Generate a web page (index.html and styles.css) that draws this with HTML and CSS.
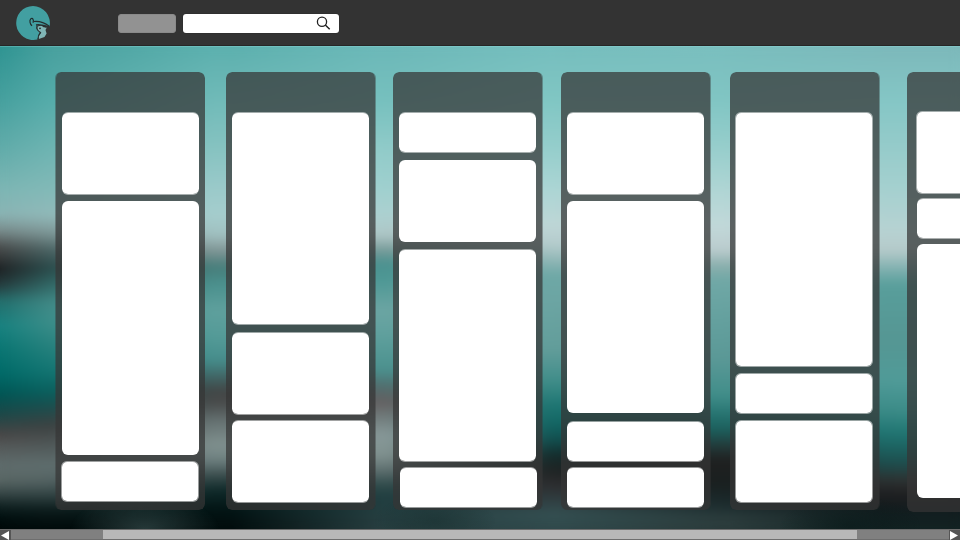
FILE: index.html
```
<!DOCTYPE html>
<html lang="en">
<head>
<meta charset="utf-8">
<title>Board</title>
<link rel="stylesheet" href="styles.css">
</head>
<body>
<header class="topbar">
  <svg class="logo" width="34" height="34" viewBox="0 0 34 34">
    <path d="M17 0A17 17 0 0 1 33.600 20.300C30 18.800 26 18.200 21.500 19.300L20.500 22.500L24 27L21.300 33.500A17 17 0 1 1 17 0Z" fill="#429fa1"/>
    <path d="M21.500 20.500L25.500 19.600L27.500 21.300L30.800 21.600L29.500 24L30.600 27.500L28.500 31L22.800 33L22.600 30.500L24.800 27.200L22 25L21.300 22.800Z" fill="#80b5b5"/>
    <path d="M16 19.800C14 18 13.200 14.500 14.700 12.900C16.400 11.400 18.200 13.500 17 16.800" fill="none" stroke="#202c2d" stroke-width="1.200"/>
    <path d="M18 15.500C23 15 29 17 33.300 20.200M20 18.900C23.500 18 27 19 30.500 21.300M21 19.500C20.200 22.500 21.500 24.800 24.500 26.500C22.500 28.500 22 30 22 33" fill="none" stroke="#252f30" stroke-width="1.100"/>
    <circle cx="24" cy="22.300" r=".9" fill="#202c2d"/>
  </svg>
  <div class="chip"></div>
  <div class="search">
    <svg width="15" height="15" viewBox="0 0 15 15" fill="none" stroke="#222">
      <circle cx="6" cy="5.700" r="4.600" stroke-width="1.300"/>
      <path d="M9.300 9L13.700 13.200" stroke-width="1.500"/>
    </svg>
  </div>
</header>
<main class="board">
  <div class="scenery">
    <div class="band b1"></div><div class="band b2"></div><div class="band b3"></div><div class="band b4"></div>
    <div class="band b5"></div><div class="band b6"></div><div class="band b7"></div><div class="glow"></div>
  </div>
  <section class="column c1"><div class="card m half"></div><div class="card xl"></div><div class="card s half"></div></section>
  <section class="column c2"><div class="card l half"></div><div class="card m half"></div><div class="card m half"></div></section>
  <section class="column c3"><div class="card s half"></div><div class="card m"></div><div class="card l half"></div><div class="card s half"></div></section>
  <section class="column c4"><div class="card m half"></div><div class="card l"></div><div class="card s half"></div><div class="card s half"></div></section>
  <section class="column c5"><div class="card xl half"></div><div class="card s half"></div><div class="card m half"></div></section>
  <section class="column c6"><div class="card m half"></div><div class="card s half"></div><div class="card xl"></div></section>
</main>
<footer class="scrollbar">
  <div class="arrow"><svg width="8" height="9" viewBox="0 0 8 9"><path d="M0 4.500L8 0V9Z" fill="#fff"/></svg></div>
  <div class="track"><div class="thumb"></div></div>
  <div class="arrow"><svg width="8" height="9" viewBox="0 0 8 9"><path d="M8 4.500L0 0V9Z" fill="#fff"/></svg></div>
</footer>
</body>
</html>
```
FILE: styles.css
```
* { box-sizing: border-box; }
body { margin: 0; width: 960px; height: 540px; overflow: hidden; display: flex; flex-direction: column; background: #333; font-family: "Liberation Sans", sans-serif; }
.topbar { height: 46px; flex: none; display: flex; align-items: center; padding-left: 16px; background: #333; border-bottom: 1px solid #262626; }
.logo { overflow: hidden; }
.chip { width: 58px; height: 19px; margin-left: 68px; margin-top: 2px; border-radius: 3px; background: #929292; border: 1px solid #8a8a8a; }
.search { width: 156px; height: 19px; margin: 2px 0 0 7px; padding-right: 8px; border-radius: 3px; background: #fff; display: flex; align-items: center; justify-content: flex-end; box-shadow: 0 0 1px #111; }

.board { position: relative; height: 483px; flex: none; display: flex; align-items: flex-start; padding: 26px 0 0 55px; overflow: hidden; }

/* Blurred landscape: vertical bands that fade into each other from left to right. */
.scenery, .band, .glow { position: absolute; inset: 0; }
.b1 { background: linear-gradient(rgb(47,148,146) 0, rgb(70,160,158) 54px, rgb(98,172,170) 104px, rgb(125,182,180) 144px, rgb(138,180,180) 168px, rgb(122,142,142) 184px, rgb(75,78,78) 201px, rgb(30,34,36) 223px, rgb(38,60,62) 239px, rgb(35,110,108) 255px, rgb(25,130,128) 279px, rgb(10,118,115) 304px, rgb(0,105,103) 329px, rgb(2,85,84) 349px, rgb(30,72,72) 369px, rgb(72,70,70) 388px, rgb(85,90,90) 401px, rgb(95,108,108) 419px, rgb(90,103,101) 434px, rgb(60,75,75) 446px, rgb(18,35,35) 460px, rgb(0,15,15) 472px, rgb(0,8,8) 483px); }
.b2 { background: linear-gradient(rgb(72,160,158) 0, rgb(85,172,170) 54px, rgb(110,180,178) 104px, rgb(130,185,183) 144px, rgb(145,185,185) 169px, rgb(125,150,150) 187px, rgb(75,100,100) 204px, rgb(42,75,75) 222px, rgb(50,105,103) 239px, rgb(65,138,135) 257px, rgb(60,142,138) 276px, rgb(40,130,126) 299px, rgb(20,118,115) 324px, rgb(10,98,96) 344px, rgb(25,80,80) 359px, rgb(60,65,65) 379px, rgb(75,82,82) 394px, rgb(95,110,110) 419px, rgb(85,100,100) 434px, rgb(50,68,68) 449px, rgb(12,28,28) 464px, rgb(0,10,10) 483px); -webkit-mask-image: linear-gradient(90deg, transparent 0, #000 52px); }
.b3 { background: linear-gradient(rgb(92,176,174) 0, rgb(112,186,184) 54px, rgb(135,195,193) 104px, rgb(155,202,202) 144px, rgb(165,205,205) 169px, rgb(160,192,192) 189px, rgb(130,150,150) 204px, rgb(70,125,122) 221px, rgb(75,145,142) 239px, rgb(95,160,157) 264px, rgb(85,155,152) 289px, rgb(70,142,140) 314px, rgb(65,105,105) 329px, rgb(66,68,68) 346px, rgb(75,78,78) 359px, rgb(100,112,112) 374px, rgb(128,145,143) 399px, rgb(110,128,128) 414px, rgb(60,78,78) 429px, rgb(15,42,42) 444px, rgb(2,20,20) 464px, rgb(2,12,12) 483px); -webkit-mask-image: linear-gradient(90deg, transparent 50px, #000 215px); }
.b4 { background: linear-gradient(rgb(108,184,184) 0, rgb(118,192,190) 54px, rgb(145,203,201) 104px, rgb(160,208,207) 144px, rgb(172,208,208) 169px, rgb(175,198,198) 189px, rgb(120,155,153) 204px, rgb(75,145,143) 217px, rgb(78,152,149) 234px, rgb(108,165,163) 264px, rgb(95,160,157) 289px, rgb(75,145,142) 324px, rgb(80,112,112) 339px, rgb(100,95,96) 356px, rgb(110,120,120) 369px, rgb(135,152,152) 389px, rgb(128,145,143) 409px, rgb(95,112,112) 424px, rgb(48,75,75) 439px, rgb(32,62,64) 451px, rgb(40,62,64) 483px); -webkit-mask-image: linear-gradient(90deg, transparent 230px, #000 380px); }
.b5 { background: linear-gradient(rgb(118,190,190) 0, rgb(128,198,195) 54px, rgb(150,206,204) 104px, rgb(172,213,212) 144px, rgb(190,214,214) 179px, rgb(180,203,204) 199px, rgb(145,183,182) 214px, rgb(110,168,166) 229px, rgb(108,165,163) 254px, rgb(98,157,154) 304px, rgb(65,142,138) 334px, rgb(30,118,115) 359px, rgb(18,100,98) 379px, rgb(18,78,78) 394px, rgb(20,45,45) 409px, rgb(30,35,35) 424px, rgb(45,45,47) 439px, rgb(48,62,65) 454px, rgb(52,80,82) 469px, rgb(48,72,74) 483px); -webkit-mask-image: linear-gradient(90deg, transparent 386px, #000 552px); }
.b6 { background: linear-gradient(rgb(122,190,190) 0, rgb(128,197,195) 54px, rgb(152,206,204) 104px, rgb(175,213,212) 144px, rgb(193,216,217) 179px, rgb(187,204,206) 204px, rgb(140,175,173) 219px, rgb(112,168,166) 234px, rgb(100,160,158) 274px, rgb(90,152,150) 314px, rgb(65,142,138) 349px, rgb(38,115,112) 369px, rgb(28,95,92) 384px, rgb(35,60,60) 399px, rgb(32,32,32) 414px, rgb(25,32,32) 439px, rgb(28,44,46) 459px, rgb(45,62,62) 474px, rgb(42,58,58) 483px); -webkit-mask-image: linear-gradient(90deg, transparent 560px, #000 720px); }
.b7 { background: linear-gradient(rgb(124,184,186) 0, rgb(132,198,197) 54px, rgb(150,203,202) 104px, rgb(165,208,207) 144px, rgb(182,210,210) 184px, rgb(182,202,202) 204px, rgb(125,175,174) 224px, rgb(88,158,155) 239px, rgb(85,150,147) 294px, rgb(80,155,152) 334px, rgb(60,140,136) 364px, rgb(35,120,117) 384px, rgb(28,102,100) 399px, rgb(30,75,75) 419px, rgb(45,50,50) 434px, rgb(30,30,32) 449px, rgb(18,28,30) 464px, rgb(18,35,35) 483px); -webkit-mask-image: linear-gradient(90deg, transparent 730px, #000 885px); }
.glow { backdrop-filter: blur(5px); background: radial-gradient(ellipse 75px 34px at 145px 483px, rgba(62,86,86,.6), transparent), radial-gradient(ellipse 60px 28px at 435px 475px, rgba(25,48,48,.6), transparent), radial-gradient(ellipse 70px 30px at 850px 480px, rgba(12,28,28,.8), transparent); box-shadow: inset 0 1px rgba(150,225,225,.3); }

.column { position: relative; flex: none; width: 150px; height: 438px; padding: 40px 6px 0 7px; border-radius: 6px; background: rgba(54,54,54,.73); background-clip: padding-box; border-right: 1px solid rgba(54,54,54,.4); display: flex; flex-direction: column; align-items: flex-start; }
.c1 { border-right: 0; border-left: 1px solid rgba(54,54,54,.4); padding-left: 6px; }
.c2 { margin-left: 21px; padding-left: 6px; }
.c3 { margin-left: 17px; padding-left: 6px; }
.c4 { margin-left: 18px; padding-left: 6px; }
.c5 { margin-left: 19px; padding-left: 5px; }
.c6 { margin-left: 27px; padding: 39px 0 0 9px; height: 440px; }

.card { flex: none; width: 137px; border-radius: 6px; background: #fff; }
.s { height: 40px; }
.m { height: 82px; }
.l { height: 212px; }
.xl { height: 254px; }
.half { border: solid rgba(255,255,255,.5); border-width: 1px 0; background-clip: padding-box; }
.s.half { height: 41px; }
.m.half { height: 83px; }
.l.half { height: 213px; }
.xl.half { height: 255px; }
.c1 .card:nth-child(2) { margin: 6px 0; }
.c1 .card:nth-child(3) { margin-left: -1px; width: 138px; border-width: 1px; }
.c2 .card:nth-child(2) { margin: 7px 0 5px; }
.c3 .card:nth-child(2) { margin: 7px 0; }
.c3 .card:nth-child(4) { margin: 5px 0 0 1px; }
.c4 .card:nth-child(2) { margin: 6px 0 8px; }
.c4 .card:nth-child(4) { margin-top: 5px; }
.c5 .card { width: 138px; border-width: 1px; }
.c5 .card:nth-child(2) { margin: 6px 0; }
.c6 .card:nth-child(1) { border-width: 1px; }
.c6 .card:nth-child(2) { margin: 4px 0 5px 1px; }
.c6 .card:nth-child(3) { margin-left: 1px; }

.scrollbar { height: 11px; flex: none; display: flex; background: #555; border-top: 1px solid #6c6c6c; }
.arrow { width: 11px; padding-right: 2px; display: flex; align-items: center; justify-content: center; background: #555; }
.track { flex: 1; padding-left: 92px; background: #808080; border-bottom: 1px solid #6e6e6e; }
.thumb { width: 754px; height: 9px; background: #b8b8b8; }
```
